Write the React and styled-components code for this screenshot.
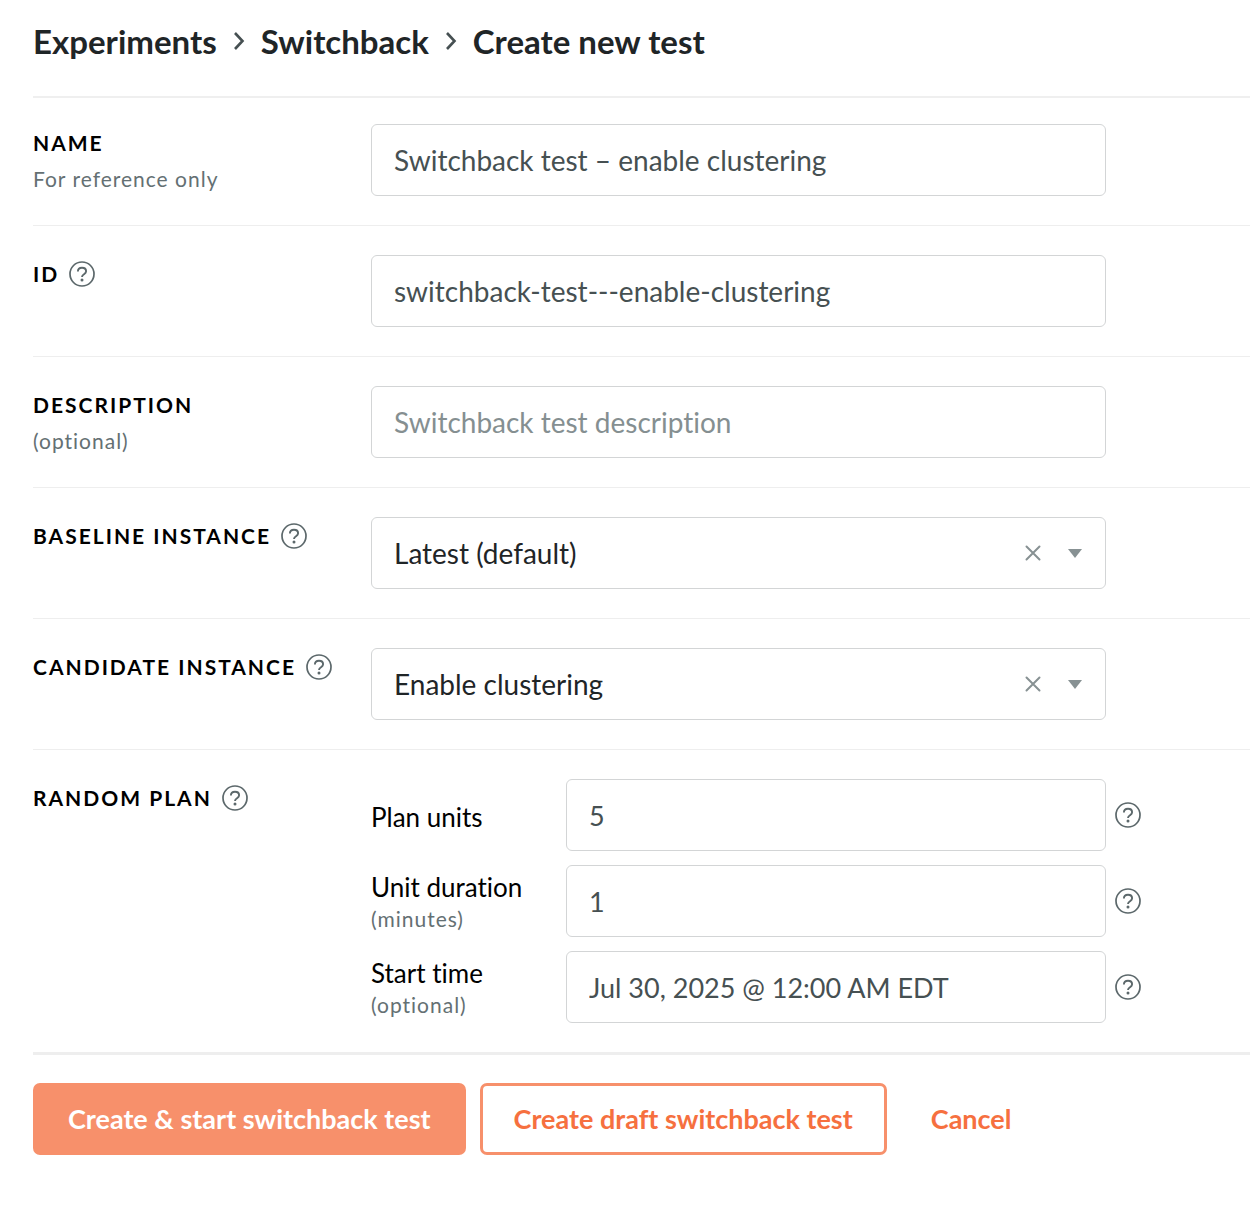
import React, { useState } from "react";
import styled, { createGlobalStyle } from "styled-components";

const GlobalStyle = createGlobalStyle`
  *, *::before, *::after { box-sizing: border-box; }
  body {
    margin: 0;
    background: #fff;
    color: #000;
    font-family: Lato, "Liberation Sans", sans-serif;
    font-variant-ligatures: none;
  }
  button, input, select { font: inherit; color: inherit; font-variant-ligatures: none; }
`;

const Page = styled.main`
  padding: 0 0 60px 33px;
`;

const Header = styled.header`
  padding: 20px 0 34px;
  border-bottom: 2px solid #efefef;
`;

const Breadcrumbs = styled.ol`
  display: flex;
  flex-wrap: wrap;
  align-items: center;
  gap: 16px;
  margin: 0;
  padding: 0;
  list-style: none;
  font-size: 33px;
  line-height: 42px;
  font-weight: 700;
  color: #1f2527;
`;

const Crumb = styled.li`
  display: flex;
  align-items: center;
  gap: 16px;
  a { color: inherit; text-decoration: none; }
`;

const Row = styled.section`
  display: grid;
  grid-template-columns: 338px minmax(0, 770px);
  padding: 29px 0;
  border-bottom: ${(p) => (p.$last ? "3px" : "1px")} solid #eeeeee;
  &:first-of-type { padding-top: 26px; }
`;

const Caption = styled.div`
  padding-top: 1px;
`;

const CaptionLine = styled.div`
  display: flex;
  align-items: center;
  gap: 10px;
  height: 36px;
`;

const Title = styled.label`
  font-size: 21px;
  line-height: 36px;
  font-weight: 700;
  letter-spacing: 2px;
  text-transform: uppercase;
  white-space: nowrap;
`;

const Hint = styled.div`
  font-size: 21px;
  line-height: ${(p) => (p.$tight ? "32px" : "35px")};
  letter-spacing: 1px;
  color: #647073;
`;

const Control = styled.div`
  position: relative;
  width: 100%;
  max-width: 735px;
`;

const TextInput = styled.input`
  display: block;
  width: 100%;
  height: 72px;
  padding: 0 22px;
  border: 1px solid #d3d5d6;
  border-radius: 6px;
  background: #fff;
  color: #465052;
  font-size: ${(p) => (p.$compact ? "27px" : "28px")};
  line-height: 36px;
  appearance: textfield;
  &::placeholder { color: #858f91; opacity: 1; }
  &::-webkit-inner-spin-button { appearance: none; margin: 0; }
`;

const Select = styled.select`
  display: block;
  width: 100%;
  height: 72px;
  padding: 0 100px 0 22px;
  border: 1px solid #d3d5d6;
  border-radius: 6px;
  background: #fff;
  color: #1f2527;
  font-size: 28px;
  line-height: 36px;
  appearance: none;
`;

const SelectTools = styled.div`
  position: absolute;
  top: 0;
  right: 24px;
  height: 100%;
  display: flex;
  align-items: center;
  gap: 27px;
  color: #879193;
  pointer-events: none;
`;

const IconButton = styled.button`
  display: flex;
  padding: 0;
  border: 0;
  background: none;
  color: ${(p) => p.$color || "#5c686b"};
  cursor: pointer;
  pointer-events: auto;
`;

const PlanGrid = styled.div`
  display: grid;
  gap: 14px;
`;

const PlanLine = styled.div`
  display: grid;
  grid-template-columns: 195px minmax(0, 540px) 35px;
  align-items: center;
  > button { justify-content: flex-end; }
`;

const PlanCaption = styled.div`
  padding-top: 4px;
`;

const PlanLabel = styled.label`
  display: block;
  font-size: 26px;
  line-height: 32px;
`;

const Actions = styled.footer`
  display: flex;
  flex-wrap: wrap;
  gap: 14px;
  padding-top: 28px;
`;

const buttonPadding = { primary: "35px", draft: "31px", plain: "30px" };

const Button = styled.button`
  height: 72px;
  padding: 0 ${(p) => buttonPadding[p.$kind]};
  border: ${(p) => (p.$kind === "draft" ? "3px solid #f7906b" : "0")};
  border-radius: 7px;
  background: ${(p) => (p.$kind === "primary" ? "#f7906b" : "#fff")};
  color: ${(p) => (p.$kind === "primary" ? "#fff" : "#f6703f")};
  font-size: 27px;
  line-height: 36px;
  font-weight: 700;
  cursor: pointer;
`;

function Chevron() {
  return (
    <svg width="12" height="20" viewBox="0 0 12 20" fill="none" aria-hidden="true">
      <path d="M2 2l7.5 8L2 18" stroke="#465052" strokeWidth="2.6" />
    </svg>
  );
}

function Help({ about }) {
  return (
    <IconButton type="button" aria-label={`Help: ${about}`}>
      <svg width="26" height="26" viewBox="0 0 26 26" fill="none" stroke="currentColor">
        <circle cx="13" cy="13" r="12" strokeWidth="1.7" />
        <path
          d="M8.9 10.6C8.9 8.1 10.6 6.8 13 6.8s4.1 1.4 4.1 3.5c0 1.4-.8 2.1-2 2.9-1.3.9-2.1 1.4-2.1 2.8"
          strokeWidth="1.9"
        />
        <circle cx="13" cy="18.9" r="1.5" fill="currentColor" stroke="none" />
      </svg>
    </IconButton>
  );
}

function FormRow({ id, title, hint, help, last, children }) {
  return (
    <Row $last={last}>
      <Caption>
        <CaptionLine>
          <Title htmlFor={id}>{title}</Title>
          {help && <Help about={title} />}
        </CaptionLine>
        {hint && <Hint>{hint}</Hint>}
      </Caption>
      {children}
    </Row>
  );
}

function InstanceSelect({ id, initial, label }) {
  const [value, setValue] = useState(initial);
  return (
    <Control>
      <Select id={id} value={value} onChange={(e) => setValue(e.target.value)}>
        <option value="" />
        <option>Latest (default)</option>
        <option>Enable clustering</option>
      </Select>
      <SelectTools>
        <IconButton type="button" $color="#879193" aria-label={`Clear ${label}`} onClick={() => setValue("")}>
          <svg width="16" height="16" viewBox="0 0 16 16" fill="none">
            <path d="M1.5 1.5l13 13M14.5 1.5l-13 13" stroke="currentColor" strokeWidth="2" strokeLinecap="round" />
          </svg>
        </IconButton>
        <svg width="14" height="10" viewBox="0 0 14 10" aria-hidden="true">
          <path d="M0 1h14L7 10z" fill="currentColor" />
        </svg>
      </SelectTools>
    </Control>
  );
}

function PlanField({ id, label, hint, type = "number", value }) {
  return (
    <PlanLine>
      <PlanCaption>
        <PlanLabel htmlFor={id}>{label}</PlanLabel>
        {hint && <Hint $tight>{hint}</Hint>}
      </PlanCaption>
      <TextInput id={id} type={type} defaultValue={value} $compact />
      <Help about={label} />
    </PlanLine>
  );
}

export default function App() {
  return (
    <Page>
      <GlobalStyle />
      <Header>
        <nav aria-label="Breadcrumb">
          <Breadcrumbs>
            <Crumb><a href="#experiments">Experiments</a><Chevron /></Crumb>
            <Crumb><a href="#switchback">Switchback</a><Chevron /></Crumb>
            <Crumb aria-current="page">Create new test</Crumb>
          </Breadcrumbs>
        </nav>
      </Header>
      <form onSubmit={(e) => e.preventDefault()}>
        <FormRow id="name" title="Name" hint="For reference only">
          <Control><TextInput id="name" defaultValue="Switchback test – enable clustering" /></Control>
        </FormRow>
        <FormRow id="test-id" title="ID" help>
          <Control><TextInput id="test-id" defaultValue="switchback-test---enable-clustering" /></Control>
        </FormRow>
        <FormRow id="description" title="Description" hint="(optional)">
          <Control><TextInput id="description" placeholder="Switchback test description" /></Control>
        </FormRow>
        <FormRow id="baseline" title="Baseline instance" help>
          <InstanceSelect id="baseline" label="baseline instance" initial="Latest (default)" />
        </FormRow>
        <FormRow id="candidate" title="Candidate instance" help>
          <InstanceSelect id="candidate" label="candidate instance" initial="Enable clustering" />
        </FormRow>
        <FormRow id="plan-units" title="Random plan" help last>
          <PlanGrid>
            <PlanField id="plan-units" label="Plan units" value="5" />
            <PlanField id="unit-duration" label="Unit duration" hint="(minutes)" value="1" />
            <PlanField id="start-time" label="Start time" hint="(optional)" type="text" value="Jul 30, 2025 @ 12:00 AM EDT" />
          </PlanGrid>
        </FormRow>
        <Actions>
          <Button type="submit" $kind="primary">Create &amp; start switchback test</Button>
          <Button type="button" $kind="draft">Create draft switchback test</Button>
          <Button type="button" $kind="plain">Cancel</Button>
        </Actions>
      </form>
    </Page>
  );
}
